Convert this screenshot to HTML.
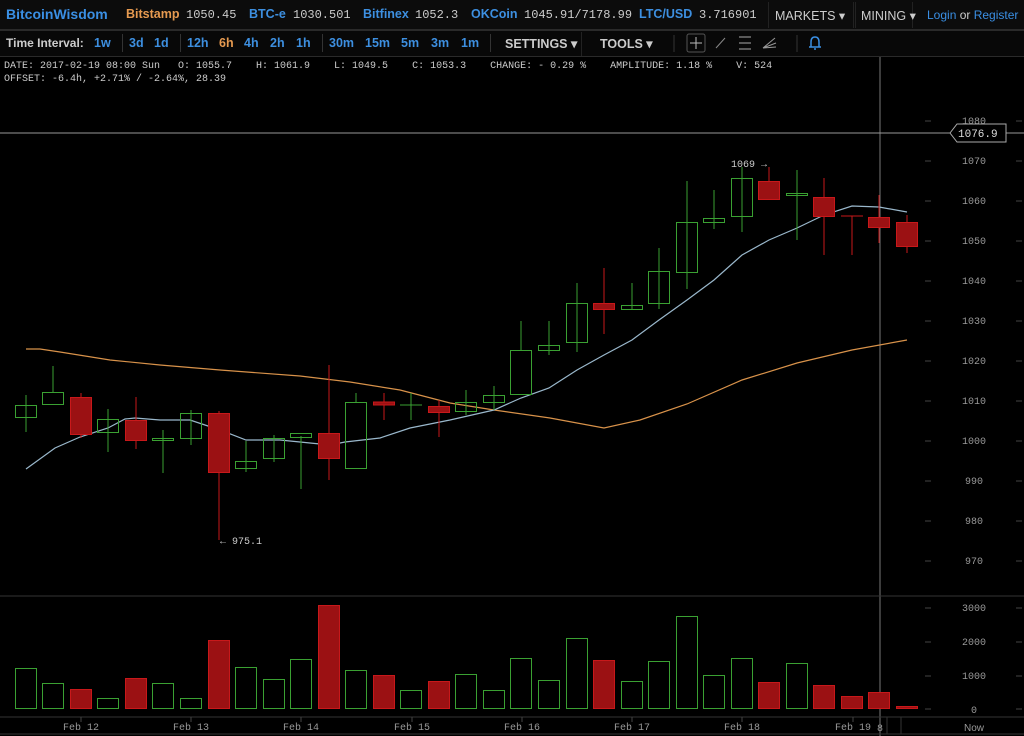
<!DOCTYPE html>
<html><head><meta charset="utf-8"><style>
body{margin:0;width:1024px;height:736px;background:#000;overflow:hidden;position:relative;font-family:"Liberation Sans",sans-serif}
.t{position:absolute;white-space:nowrap}
.b{font-weight:bold}
.m{font-family:"Liberation Mono",monospace}
.blue{color:#3d8fe0}
.h{font-size:12.5px;top:7px}
.tb{font-size:12.5px;top:36px}
</style></head><body>
<div style="position:absolute;left:0;top:0;width:1024px;height:29px;background:#0c0c0c;border-bottom:2px solid #2a2a2a"></div>
<div style="position:absolute;left:0;top:31px;width:1024px;height:25px;background:#080808;border-bottom:1px solid #2a2a2a"></div>
<div class="t b blue" style="left:6px;top:6px;font-size:14px;color:#3a8fe4">BitcoinWisdom</div>
<div class="t b h" style="left:126px;color:#e69a50">Bitstamp</div>
<div class="t m" style="left:186px;top:8px;font-size:12px;color:#ccc">1050.45</div>
<div class="t b blue h" style="left:249px">BTC-e</div>
<div class="t m" style="left:293px;top:8px;font-size:12px;color:#ccc">1030.501</div>
<div class="t b blue h" style="left:363px">Bitfinex</div>
<div class="t m" style="left:415px;top:8px;font-size:12px;color:#ccc">1052.3</div>
<div class="t b blue h" style="left:471px">OKCoin</div>
<div class="t m" style="left:524px;top:8px;font-size:12px;color:#ccc">1045.91/7178.99</div>
<div class="t b blue h" style="left:639px">LTC/USD</div>
<div class="t m" style="left:699px;top:8px;font-size:12px;color:#ccc">3.716901</div>
<div style="position:absolute;left:768px;top:2px;width:84px;height:26px;border-left:1px solid #222;border-right:1px solid #222"></div>
<div class="t" style="left:775px;top:8px;font-size:12.5px;color:#ccc">MARKETS ▾</div>
<div style="position:absolute;left:855px;top:2px;width:56px;height:26px;border-left:1px solid #222;border-right:1px solid #222"></div>
<div class="t" style="left:861px;top:8px;font-size:12.5px;color:#ccc">MINING ▾</div>
<div class="t" style="left:927px;top:8px;font-size:12px;color:#3a8fe4">Login <span style="color:#ccc">or</span> Register</div>

<div class="t b tb" style="left:6px;font-size:12px;color:#ccc">Time Interval:</div>
<div class="t b blue tb" style="left:94px">1w</div>
<div style="position:absolute;left:122px;top:34px;width:1px;height:18px;background:#333"></div>
<div class="t b blue tb" style="left:129px">3d</div>
<div class="t b blue tb" style="left:154px">1d</div>
<div style="position:absolute;left:180px;top:34px;width:1px;height:18px;background:#333"></div>
<div class="t b blue tb" style="left:187px">12h</div>
<div class="t b tb" style="left:219px;color:#e69a50">6h</div>
<div class="t b blue tb" style="left:244px">4h</div>
<div class="t b blue tb" style="left:270px">2h</div>
<div class="t b blue tb" style="left:296px">1h</div>
<div style="position:absolute;left:322px;top:34px;width:1px;height:18px;background:#333"></div>
<div class="t b blue tb" style="left:329px">30m</div>
<div class="t b blue tb" style="left:365px">15m</div>
<div class="t b blue tb" style="left:401px">5m</div>
<div class="t b blue tb" style="left:431px">3m</div>
<div class="t b blue tb" style="left:461px">1m</div>
<div style="position:absolute;left:490px;top:34px;width:1px;height:18px;background:#333"></div>
<div style="position:absolute;left:581px;top:32px;width:1px;height:24px;background:#222"></div>
<div class="t b tb" style="left:505px;color:#ccc">SETTINGS ▾</div>
<div class="t b tb" style="left:600px;color:#ccc">TOOLS ▾</div>
<svg style="position:absolute;left:0;top:0" width="1024" height="60">
<line x1="674" y1="35" x2="674" y2="52" stroke="#333"/>
<rect x="687" y="34" width="18" height="18" rx="2" fill="none" stroke="#555"/>
<line x1="696" y1="37" x2="696" y2="49" stroke="#bbb"/><line x1="690" y1="43" x2="702" y2="43" stroke="#bbb"/>
<line x1="716" y1="48" x2="725" y2="38" stroke="#888"/>
<line x1="739" y1="37" x2="751" y2="37" stroke="#aaa"/><line x1="739" y1="43" x2="751" y2="43" stroke="#aaa"/><line x1="739" y1="49" x2="751" y2="49" stroke="#aaa"/>
<path d="M763 48 L775 38 M763 48 L776 43 M763 48 L776 47" stroke="#999" fill="none"/>
<line x1="797" y1="35" x2="797" y2="52" stroke="#333"/>
<path d="M811 47 L811 42 Q811 37 815 37 Q819 37 819 42 L819 47 Z M809 47 L821 47 M814 49 L816 49" stroke="#3a8fe4" stroke-width="1.5" fill="none"/>
</svg>
<div class="t m" style="left:4px;top:60px;font-size:10px;color:#ccc;line-height:13px">DATE: 2017-02-19 08:00 Sun &nbsp; O: 1055.7 &nbsp; &nbsp;H: 1061.9 &nbsp; &nbsp;L: 1049.5 &nbsp; &nbsp;C: 1053.3 &nbsp; &nbsp;CHANGE: - 0.29 % &nbsp; &nbsp;AMPLITUDE: 1.18 % &nbsp; &nbsp;V: 524<br>OFFSET: -6.4h, +2.71% / -2.64%, 28.39</div>

<svg style="position:absolute;left:0;top:0" width="1024" height="736" font-family="Liberation Mono, monospace" font-size="10">
<line x1="880" y1="57" x2="880" y2="736" stroke="#777"/>
<line x1="0" y1="133" x2="1024" y2="133" stroke="#999"/>
<line x1="0" y1="596" x2="1024" y2="596" stroke="#333"/>
<line x1="0" y1="717" x2="1024" y2="717" stroke="#333"/>
<line x1="0" y1="734" x2="1024" y2="734" stroke="#333"/>
<line x1="887" y1="717" x2="887" y2="734" stroke="#333"/>
<line x1="901" y1="717" x2="901" y2="734" stroke="#333"/>
<g stroke="#444">
<line x1="925" y1="121" x2="931" y2="121"/><line x1="1016" y1="121" x2="1022" y2="121"/>
<line x1="925" y1="161" x2="931" y2="161"/><line x1="1016" y1="161" x2="1022" y2="161"/>
<line x1="925" y1="201" x2="931" y2="201"/><line x1="1016" y1="201" x2="1022" y2="201"/>
<line x1="925" y1="241" x2="931" y2="241"/><line x1="1016" y1="241" x2="1022" y2="241"/>
<line x1="925" y1="281" x2="931" y2="281"/><line x1="1016" y1="281" x2="1022" y2="281"/>
<line x1="925" y1="321" x2="931" y2="321"/><line x1="1016" y1="321" x2="1022" y2="321"/>
<line x1="925" y1="361" x2="931" y2="361"/><line x1="1016" y1="361" x2="1022" y2="361"/>
<line x1="925" y1="401" x2="931" y2="401"/><line x1="1016" y1="401" x2="1022" y2="401"/>
<line x1="925" y1="441" x2="931" y2="441"/><line x1="1016" y1="441" x2="1022" y2="441"/>
<line x1="925" y1="481" x2="931" y2="481"/><line x1="1016" y1="481" x2="1022" y2="481"/>
<line x1="925" y1="521" x2="931" y2="521"/><line x1="1016" y1="521" x2="1022" y2="521"/>
<line x1="925" y1="561" x2="931" y2="561"/><line x1="1016" y1="561" x2="1022" y2="561"/>
<line x1="925" y1="608" x2="931" y2="608"/><line x1="1016" y1="608" x2="1022" y2="608"/>
<line x1="925" y1="642" x2="931" y2="642"/><line x1="1016" y1="642" x2="1022" y2="642"/>
<line x1="925" y1="676" x2="931" y2="676"/><line x1="1016" y1="676" x2="1022" y2="676"/>
<line x1="925" y1="709" x2="931" y2="709"/><line x1="1016" y1="709" x2="1022" y2="709"/>
<line x1="81" y1="717" x2="81" y2="722"/><line x1="191" y1="717" x2="191" y2="722"/><line x1="301" y1="717" x2="301" y2="722"/><line x1="412" y1="717" x2="412" y2="722"/><line x1="522" y1="717" x2="522" y2="722"/><line x1="632" y1="717" x2="632" y2="722"/><line x1="742" y1="717" x2="742" y2="722"/><line x1="853" y1="717" x2="853" y2="722"/>
</g>
<g fill="#999" text-anchor="middle">
<text x="974" y="124">1080</text><text x="974" y="164">1070</text><text x="974" y="204">1060</text><text x="974" y="244">1050</text><text x="974" y="284">1040</text><text x="974" y="324">1030</text><text x="974" y="364">1020</text><text x="974" y="404">1010</text><text x="974" y="444">1000</text><text x="974" y="484">990</text><text x="974" y="524">980</text><text x="974" y="564">970</text>
<text x="974" y="611">3000</text><text x="974" y="645">2000</text><text x="974" y="679">1000</text><text x="974" y="713">0</text>
<text x="81" y="730">Feb 12</text><text x="191" y="730">Feb 13</text><text x="301" y="730">Feb 14</text><text x="412" y="730">Feb 15</text><text x="522" y="730">Feb 16</text><text x="632" y="730">Feb 17</text><text x="742" y="730">Feb 18</text><text x="853" y="730">Feb 19</text><text x="880" y="731">8</text><text x="974" y="731" font-family="Liberation Sans">Now</text>
</g>
<path d="M950 133 L957 124 L1006 124 L1006 142 L957 142 Z" fill="#000" stroke="#aaa"/>
<text x="958" y="137" fill="#ddd" font-size="11">1076.9</text>
<text x="731" y="167" fill="#ccc" font-size="10">1069 →</text>
<text x="220" y="544" fill="#ccc" font-size="10">← 975.1</text>

<polyline fill="none" stroke="#d8924a" stroke-width="1.2" points="26,349 40,349 60,352 110,360 160,365 220,370 300,376 350,382 400,390 450,403 494,410 550,418 604,428 640,420 687,404 742,380 797,363 852,350 907,340"/>
<polyline fill="none" stroke="#9ab8cc" stroke-width="1.2" points="26,469 55,448 80,437 108,428 125,419 135,418 160,420 190,420 220,430 246,440 280,440 300,442 330,445 345,442 380,438 410,428 450,420 494,410 521,398 549,388 577,370 604,355 632,340 659,320 687,300 714,280 742,255 769,240 797,228 824,215 852,206 879,207 907,212"/>

<g stroke="#3aa132" fill="none">
<line x1="26" y1="395" x2="26" y2="432"/><rect x="15.5" y="405.5" width="21" height="12"/>
<line x1="53" y1="366" x2="53" y2="392"/><rect x="42.5" y="392.5" width="21" height="12"/>
<line x1="108" y1="409" x2="108" y2="452"/><rect x="97.5" y="419.5" width="21" height="13"/>
<line x1="163" y1="430" x2="163" y2="473"/><rect x="152.5" y="438.5" width="21" height="2"/>
<line x1="191" y1="410" x2="191" y2="445"/><rect x="180.5" y="413.5" width="21" height="25"/>
<line x1="246" y1="441" x2="246" y2="472"/><rect x="235.5" y="461.5" width="21" height="7"/>
<line x1="274" y1="435" x2="274" y2="462"/><rect x="263.5" y="438.5" width="21" height="20"/>
<line x1="301" y1="436" x2="301" y2="489"/><rect x="290.5" y="433.5" width="21" height="4"/>
<line x1="356" y1="393" x2="356" y2="402"/><rect x="345.5" y="402.5" width="21" height="66"/>
<line x1="411" y1="393" x2="411" y2="420"/><line x1="400" y1="405" x2="422" y2="405"/>
<line x1="466" y1="390" x2="466" y2="415"/><rect x="455.5" y="402.5" width="21" height="9"/>
<line x1="494" y1="386" x2="494" y2="410"/><rect x="483.5" y="395.5" width="21" height="7"/>
<line x1="521" y1="321" x2="521" y2="350"/><rect x="510.5" y="350.5" width="21" height="44"/>
<line x1="549" y1="321" x2="549" y2="355"/><rect x="538.5" y="345.5" width="21" height="5"/>
<line x1="577" y1="283" x2="577" y2="352"/><rect x="566.5" y="303.5" width="21" height="39"/>
<line x1="632" y1="283" x2="632" y2="309"/><rect x="621.5" y="305.5" width="21" height="4"/>
<line x1="659" y1="248" x2="659" y2="309"/><rect x="648.5" y="271.5" width="21" height="32"/>
<line x1="687" y1="181" x2="687" y2="289"/><rect x="676.5" y="222.5" width="21" height="50"/>
<line x1="714" y1="190" x2="714" y2="229"/><rect x="703.5" y="218.5" width="21" height="4"/>
<line x1="742" y1="167" x2="742" y2="232"/><rect x="731.5" y="178.5" width="21" height="38"/>
<line x1="797" y1="170" x2="797" y2="240"/><rect x="786.5" y="193.5" width="21" height="2"/>
</g>
<g stroke="#c8181a" fill="#9b1113">
<line x1="81" y1="393" x2="81" y2="438"/><rect x="70.5" y="397.5" width="21" height="37"/>
<line x1="136" y1="397" x2="136" y2="449"/><rect x="125.5" y="420.5" width="21" height="20"/>
<line x1="219" y1="411" x2="219" y2="540"/><rect x="208.5" y="413.5" width="21" height="59"/>
<line x1="329" y1="365" x2="329" y2="480"/><rect x="318.5" y="433.5" width="21" height="25"/>
<line x1="384" y1="393" x2="384" y2="420"/><rect x="373.5" y="402" width="21" height="3"/>
<line x1="439" y1="400" x2="439" y2="437"/><rect x="428.5" y="406.5" width="21" height="6"/>
<line x1="604" y1="268" x2="604" y2="334"/><rect x="593.5" y="303.5" width="21" height="6"/>
<line x1="769" y1="167" x2="769" y2="200"/><rect x="758.5" y="181.5" width="21" height="18"/>
<line x1="824" y1="178" x2="824" y2="255"/><rect x="813.5" y="197.5" width="21" height="19"/>
<line x1="852" y1="216" x2="852" y2="255"/><line x1="841" y1="216" x2="863" y2="216"/>
<line x1="879" y1="195" x2="879" y2="243"/><rect x="868.5" y="217.5" width="21" height="10"/>
<line x1="907" y1="215" x2="907" y2="253"/><rect x="896.5" y="222.5" width="21" height="24"/>
</g>

<g stroke="#3aa132" fill="none">
<rect x="15.5" y="668.5" width="21" height="40"/>
<rect x="42.5" y="683.5" width="21" height="25"/>
<rect x="97.5" y="698.5" width="21" height="10"/>
<rect x="152.5" y="683.5" width="21" height="25"/>
<rect x="180.5" y="698.5" width="21" height="10"/>
<rect x="235.5" y="667.5" width="21" height="41"/>
<rect x="263.5" y="679.5" width="21" height="29"/>
<rect x="290.5" y="659.5" width="21" height="49"/>
<rect x="345.5" y="670.5" width="21" height="38"/>
<rect x="400.5" y="690.5" width="21" height="18"/>
<rect x="455.5" y="674.5" width="21" height="34"/>
<rect x="483.5" y="690.5" width="21" height="18"/>
<rect x="510.5" y="658.5" width="21" height="50"/>
<rect x="538.5" y="680.5" width="21" height="28"/>
<rect x="566.5" y="638.5" width="21" height="70"/>
<rect x="621.5" y="681.5" width="21" height="27"/>
<rect x="648.5" y="661.5" width="21" height="47"/>
<rect x="676.5" y="616.5" width="21" height="92"/>
<rect x="703.5" y="675.5" width="21" height="33"/>
<rect x="731.5" y="658.5" width="21" height="50"/>
<rect x="786.5" y="663.5" width="21" height="45"/>
</g>
<g stroke="#c8181a" fill="#9b1113">
<rect x="70.5" y="689.5" width="21" height="19"/>
<rect x="125.5" y="678.5" width="21" height="30"/>
<rect x="208.5" y="640.5" width="21" height="68"/>
<rect x="318.5" y="605.5" width="21" height="103"/>
<rect x="373.5" y="675.5" width="21" height="33"/>
<rect x="428.5" y="681.5" width="21" height="27"/>
<rect x="593.5" y="660.5" width="21" height="48"/>
<rect x="758.5" y="682.5" width="21" height="26"/>
<rect x="813.5" y="685.5" width="21" height="23"/>
<rect x="841.5" y="696.5" width="21" height="12"/>
<rect x="868.5" y="692.5" width="21" height="16"/>
<rect x="896.5" y="706.5" width="21" height="2"/>
</g>
</svg>
</body></html>
